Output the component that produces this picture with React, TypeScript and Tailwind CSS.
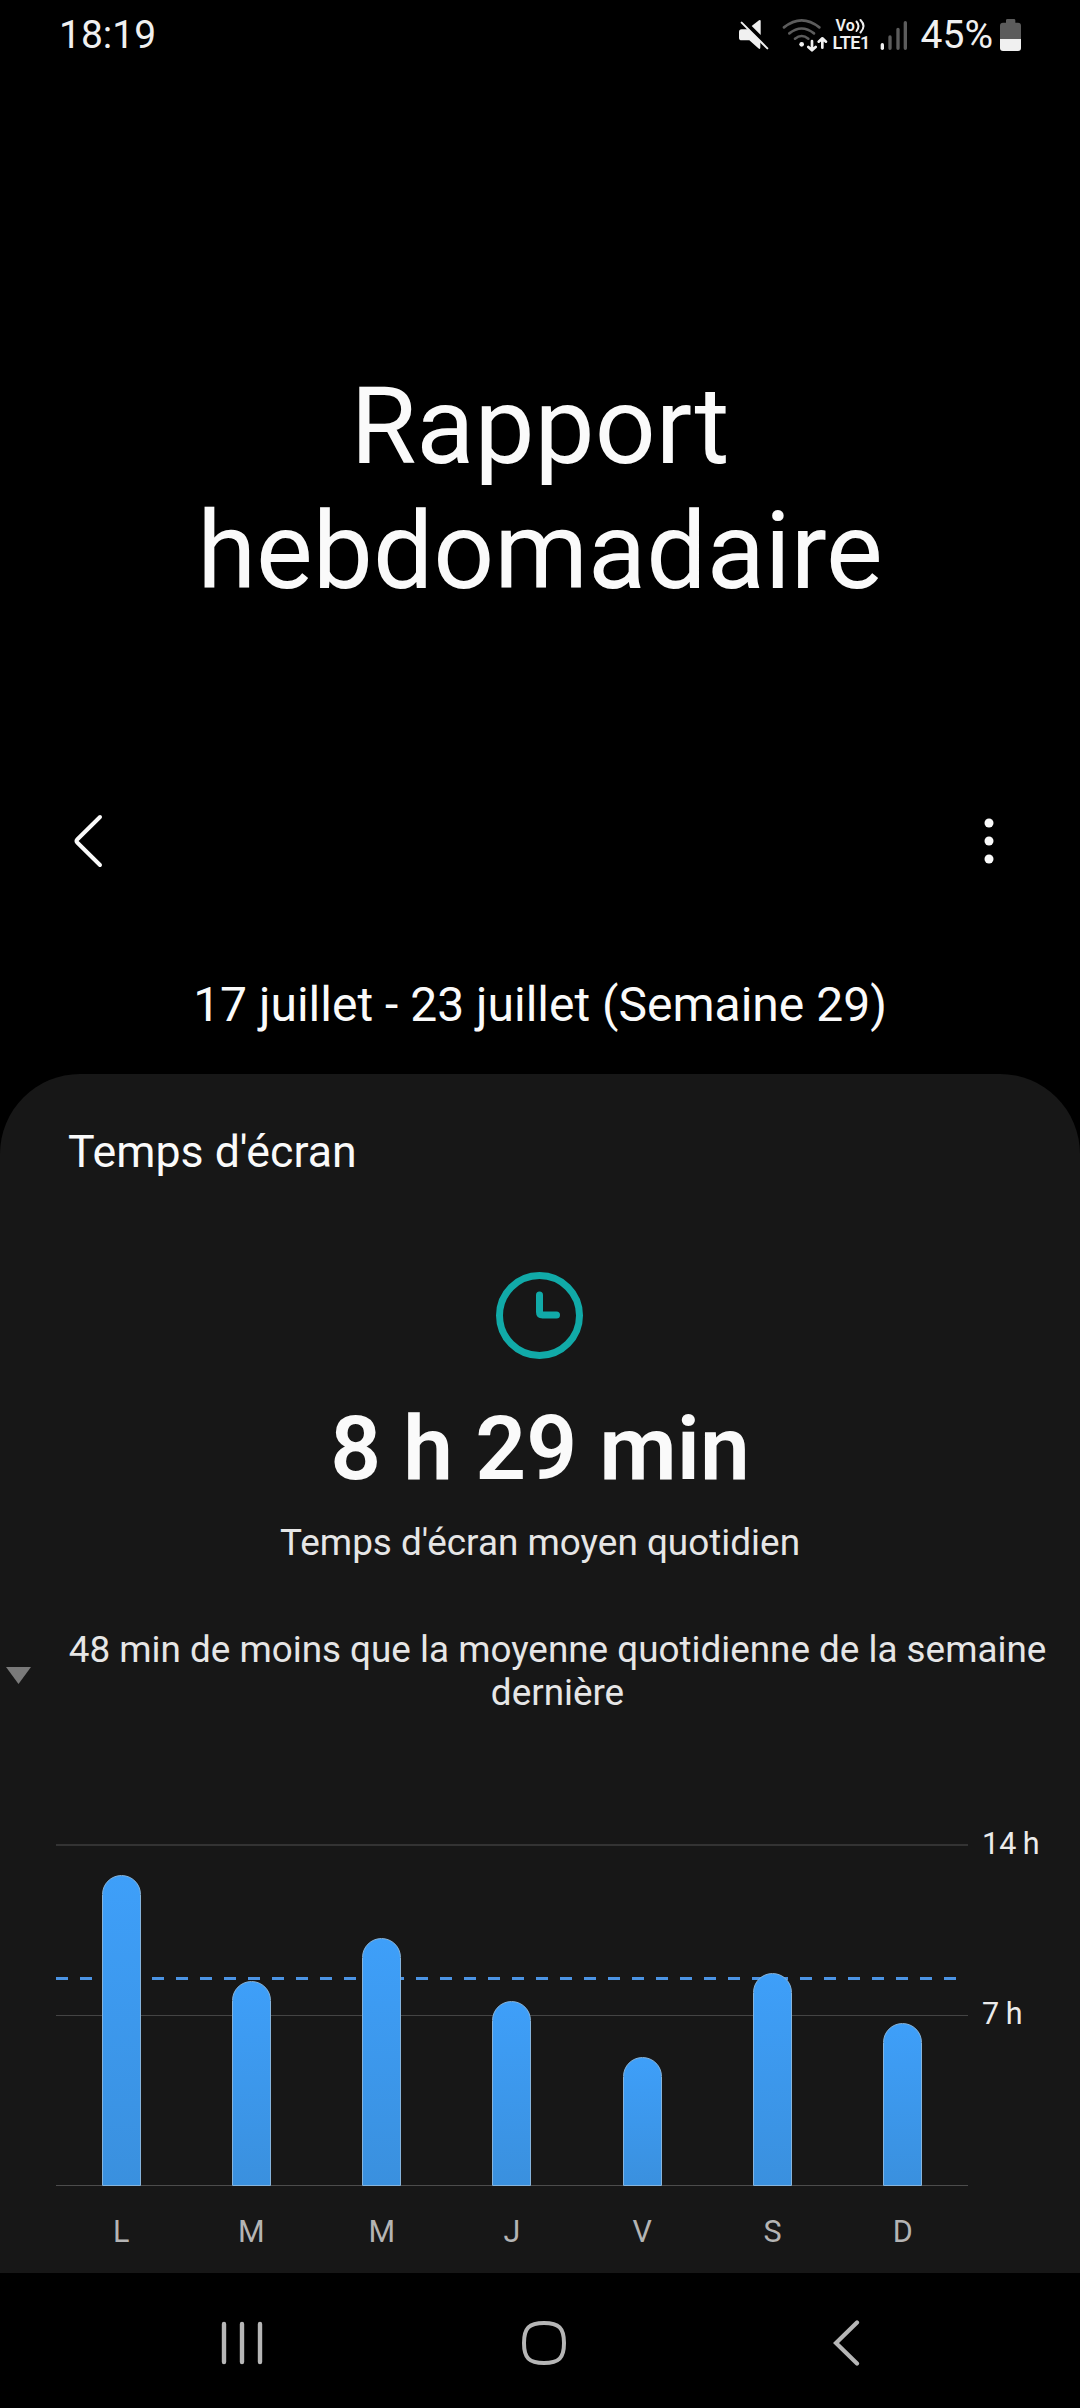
import React from 'react';

interface DayUsage {
  label: string;
  height: number;
}

const week: DayUsage[] = [
  { label: 'L', height: 311 },
  { label: 'M', height: 205 },
  { label: 'M', height: 248 },
  { label: 'J', height: 185 },
  { label: 'V', height: 129 },
  { label: 'S', height: 213 },
  { label: 'D', height: 163 },
];

const MuteIcon = () => (
  <svg className="w-8 h-[34px]" viewBox="54 54 96 102" fill="#f0f0f0">
    <path d="M65 88h19l37 37v17q0 8-6 3L88 121H65q-8 0-8-8V96q0-8 8-8z" />
    <path d="M95 78l22-17q5-3 5 3v41z" />
    <path d="M65 68l77 77" stroke="#f0f0f0" strokeWidth="6" strokeLinecap="round" />
  </svg>
);

const WifiIcon = () => (
  <svg className="w-[46px] h-[34px]" viewBox="186 51 138 102" fill="none" strokeLinecap="round">
    <g stroke="#5c5c5c" strokeWidth="8">
      <path d="M192 79Q245 37 298 79" />
      <path d="M208 97Q245 68 282 97" />
      <path d="M225 113Q245 97 265 113" />
    </g>
    <circle cx="245" cy="130" r="7" fill="#f0f0f0" />
    <g stroke="#f0f0f0" strokeWidth="8" strokeLinejoin="round">
      <path d="M276 120v28M265 138l11 10 11-10" />
      <path d="M307 140v-28M296 122l11-10 11 10" />
    </g>
  </svg>
);

const VolteIcon = () => (
  <div className="w-[38px] h-[33px] flex flex-col font-semibold text-[#f0f0f0]">
    <div className="flex h-4 pl-[3px]">
      <span className="text-[16px] leading-4">Vo</span>
      <svg className="w-[11px] h-4" viewBox="0 0 11 16" fill="none" stroke="#f0f0f0" strokeWidth="2" strokeLinecap="round">
        <path d="M1.5 3.5Q5.5 8 1.5 13" />
        <path d="M5.5 2Q11.5 8 5.5 14.5" />
      </svg>
    </div>
    <span className="text-[18px] leading-[18px] -tracking-[0.5px]">LTE1</span>
  </div>
);

const SignalIcon = () => (
  <svg className="w-7 h-[34px]" viewBox="479 51 84 102" fill="none" strokeLinecap="round" strokeWidth="10">
    <path d="M486 131v11" stroke="#f0f0f0" />
    <path d="M509 108v34M533 85v57M555 65v77" stroke="#5c5c5c" />
  </svg>
);

const BatteryIcon = () => (
  <svg className="w-[21px] h-8" viewBox="840 57 63 96">
    <path d="M858 61q0-4 4-4h20q4 0 4 4v7h8q9 0 9 9v40h-63V77q0-9 9-9h9z" fill="#5c5c5c" />
    <path d="M840 117h63v27q0 9-9 9h-45q-9 0-9-9z" fill="#f0f0f0" />
  </svg>
);

const StatusBar = () => (
  <div className="h-[69px] flex items-center justify-between pl-[59px] pr-[59px] text-[39px] leading-[46px] text-[#f0f0f0]">
    <span>18:19</span>
    <div className="flex items-center">
      <MuteIcon />
      <div className="ml-3"><WifiIcon /></div>
      <div className="ml-[5px]"><VolteIcon /></div>
      <div className="ml-[9px]"><SignalIcon /></div>
      <span className="ml-[13px]">45%</span>
      <div className="ml-[7px]"><BatteryIcon /></div>
    </div>
  </div>
);

const UsageChart = () => (
  <div className="flex mt-[131px] pl-14">
    <div className="w-[912px]">
      <div className="relative h-[341px]">
        <div className="absolute inset-x-0 -top-px h-0.5 bg-[#333333]" />
        <div className="absolute inset-x-0 top-[170px] h-px bg-[#444444]" />
        <div className="absolute inset-x-0 bottom-0 h-px bg-[#4c4c4c]" />
        <svg className="absolute left-0 top-[132px] w-[912px] h-[3px]" viewBox="0 0 912 3">
          <path d="M0 1.5H902" stroke="#4c94e4" strokeWidth="3" strokeDasharray="12 12" />
        </svg>
        <div className="relative h-full grid grid-cols-7 items-end justify-items-center">
          {week.map((day, i) => (
            <div
              key={i}
              className="w-[39px] rounded-t-full border border-[#86b4dc] bg-gradient-to-b from-[#3e9ff9] to-[#3a90de]"
              style={{ height: day.height }}
            />
          ))}
        </div>
      </div>
      <div className="grid grid-cols-7 mt-[28px] text-center text-[30.5px] leading-9 text-[#b4b4b4]">
        {week.map((day, i) => (
          <span key={i}>{day.label}</span>
        ))}
      </div>
    </div>
    <div className="ml-[14px] -mt-[19px] text-[30.5px] leading-9 [word-spacing:-1px] text-[#ebebeb]">
      <div className="h-[170px]">14 h</div>
      <div>7 h</div>
    </div>
  </div>
);

const ScreenTimeCard = () => (
  <section className="h-[1199px] mt-[41px] pt-[52px] rounded-t-[80px] bg-[#171717]">
    <h2 className="pl-[68px] text-[44.7px] leading-[53px]">Temps d'écran</h2>
    <svg className="block ml-[496px] mt-[93px] w-[87px] h-[87px]" viewBox="0 0 87 87" fill="none" stroke="#11aaa8" strokeWidth="7">
      <circle cx="43.5" cy="43.5" r="40" />
      <path d="M43.5 23v17q0 3 3 3h14" strokeLinecap="round" />
    </svg>
    <div className="mt-[37px] text-center text-[89.2px] leading-[106px] font-semibold">8 h 29 min</div>
    <div className="mt-[19px] text-center text-[36.9px] leading-11 text-[#e6e6e6]">Temps d'écran moyen quotidien</div>
    <div className="flex items-center mt-[63px] text-[#e6e6e6]">
      <svg className="ml-1.5 mt-[9px] w-[25px] h-[17px]" viewBox="0 0 25 17">
        <path d="M0 0h25L12.5 17z" fill="#7a7a7a" />
      </svg>
      <p className="flex-1 pl-1 text-center text-[36.85px] leading-[43px]">
        48 min de moins que la moyenne quotidienne de la semaine<br />dernière
      </p>
    </div>
    <UsageChart />
  </section>
);

const NavBar = () => (
  <nav className="h-[135px] flex items-center justify-between pl-[221px] pr-[219px] pt-[5px]">
    <svg className="w-[42px] h-[46px]" viewBox="0 0 42 46" stroke="#b6b6b6" strokeWidth="4.4" strokeLinecap="round">
      <path d="M3 4v38M21 4v38M39 4v38" />
    </svg>
    <svg className="w-11 h-11 mr-[9px]" viewBox="0 0 44 44" fill="none" stroke="#b6b6b6" strokeWidth="4">
      <path d="M22 2C37 2 42 7 42 22S37 42 22 42 2 37 2 22 7 2 22 2z" />
    </svg>
    <svg className="w-7 h-[46px]" viewBox="0 0 28 46" fill="none" stroke="#b6b6b6" strokeWidth="4.2" strokeLinecap="round">
      <path d="M24 2.5L3 23l21 20.5" />
    </svg>
  </nav>
);

const App: React.FC = () => {
  return (
    <div className="w-[1080px] h-[2408px] overflow-hidden bg-black text-[#fafafa] font-['Roboto',sans-serif]">
      <StatusBar />
      <h1 className="mt-[295px] text-center text-[107px] leading-[125px]">
        Rapport<br />hebdomadaire
      </h1>
      <div className="h-28 mt-[171px] pl-[74px] pr-[86px] flex items-center justify-between">
        <svg className="w-[30px] h-[54px]" viewBox="0 0 30 54" fill="none" stroke="#fafafa" strokeWidth="4" strokeLinecap="round" strokeLinejoin="round">
          <path d="M26 3L3.2 25.5q-1.5 1.5 0 3L26 51" />
        </svg>
        <svg className="w-[10px] h-[46px]" viewBox="0 0 10 46" fill="#fafafa">
          <circle cx="5" cy="5" r="4.5" />
          <circle cx="5" cy="23" r="4.5" />
          <circle cx="5" cy="41" r="4.5" />
        </svg>
      </div>
      <div className="mt-20 text-center text-[48px] leading-[56px]">17 juillet - 23 juillet (Semaine 29)</div>
      <ScreenTimeCard />
      <NavBar />
    </div>
  );
};

export default App;
